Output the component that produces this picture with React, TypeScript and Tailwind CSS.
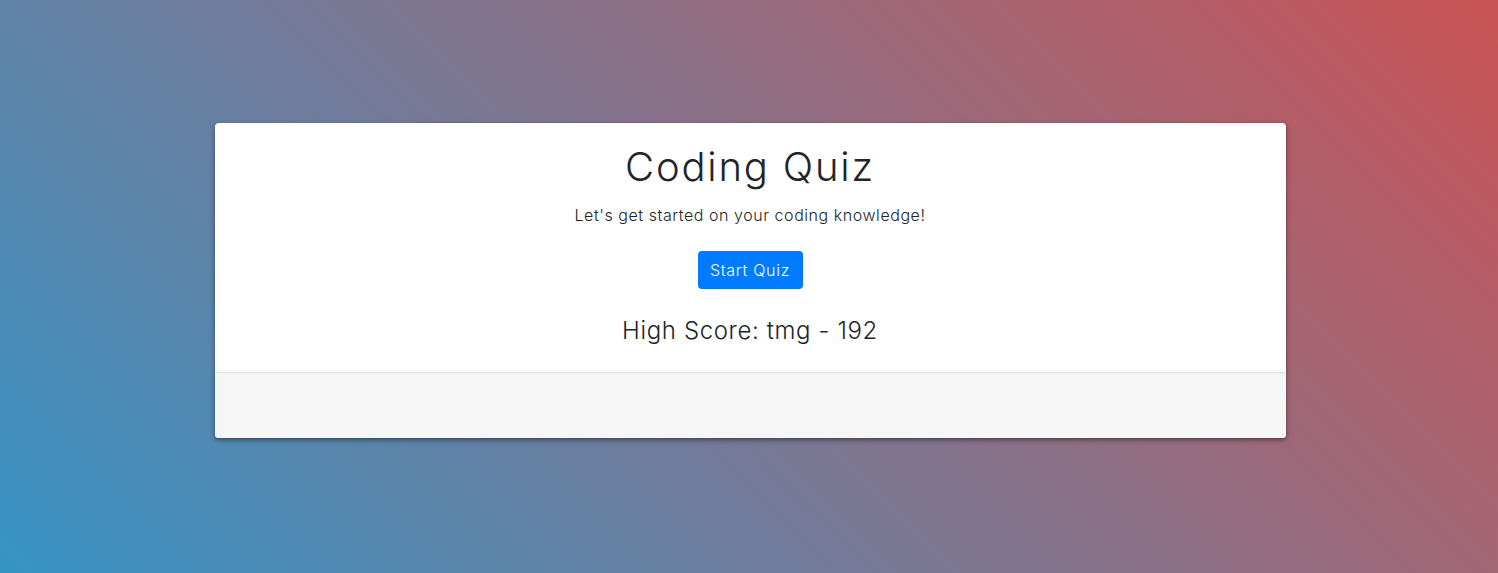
export default function App() {
  return (
    <div className="min-h-[573px] w-full bg-[linear-gradient(45deg,#3794c5,#cb5456)] pt-[123px] font-['Inter',sans-serif]">
      <div className="mx-auto w-[1071px] translate-x-px overflow-hidden rounded bg-white shadow-[0_2px_5px_rgba(0,0,0,0.45)]">
        <div className="px-5 pt-5 pb-[27px] text-center text-[#212529]">
          <h1 className="mb-3 text-[40px] leading-[48px] font-light tracking-[1.8px]">Coding Quiz</h1>
          <p className="mb-6 text-base leading-6 font-light tracking-[0.55px]">Let's get started on your coding knowledge!</p>
          <button className="h-[38px] w-[105px] rounded bg-[#007bff] text-base font-light tracking-[0.7px] text-white">Start Quiz</button>
          <h4 className="mt-[27px] text-2xl leading-[29px] font-light tracking-[0.63px]">High Score: tmg - 192</h4>
        </div>
        <div className="h-[66px] border-t border-[#dfdfdf] bg-[#f6f6f6]"></div>
      </div>
    </div>
  );
}
